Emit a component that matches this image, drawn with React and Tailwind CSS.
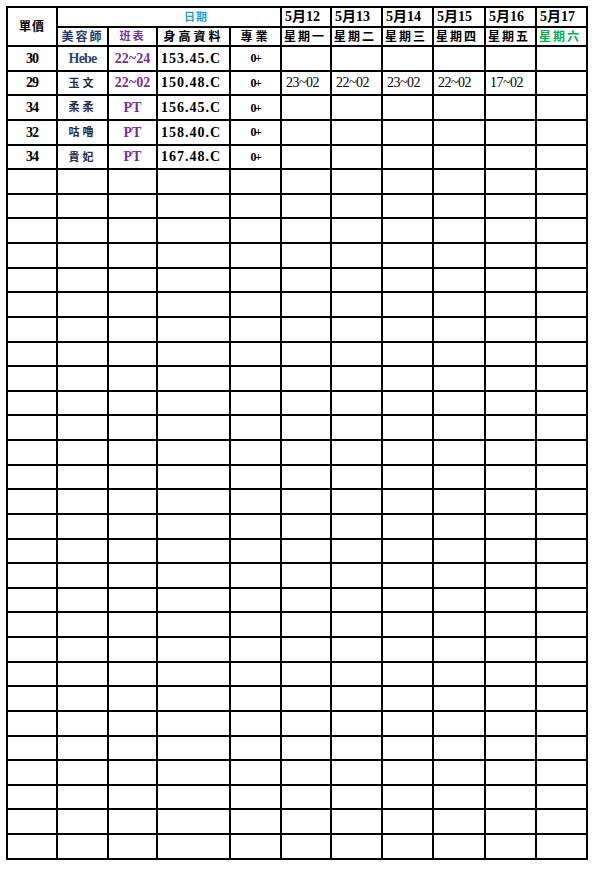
import React from 'react'

const SERIF = { fontFamily: '"Liberation Serif", "Noto Sans CJK TC", serif' }

const DATES = [
  { d: '5月12', w: '星期一' },
  { d: '5月13', w: '星期二' },
  { d: '5月14', w: '星期三' },
  { d: '5月15', w: '星期四' },
  { d: '5月16', w: '星期五' },
  { d: '5月17', w: '星期六', green: true },
]

const ROWS = [
  { price: '30', name: 'Hebe', latin: true, shift: '22~24', size: '153.45.C', days: ['', '', '', '', '', ''] },
  { price: '29', name: '玉文', shift: '22~02', size: '150.48.C', days: ['23~02', '22~02', '23~02', '22~02', '17~02', ''] },
  { price: '34', name: '柔柔', shift: 'PT', size: '156.45.C', days: ['', '', '', '', '', ''] },
  { price: '32', name: '咕嚕', shift: 'PT', size: '158.40.C', days: ['', '', '', '', '', ''] },
  { price: '34', name: '貴妃', shift: 'PT', size: '167.48.C', days: ['', '', '', '', '', ''] },
]

const EMPTY_ROWS = 28

export default function App() {
  return (
    <div className="w-[597px] h-[870px] bg-white pt-[6px] pl-[6px]" style={SERIF}>
      <div
        className="inline-grid bg-black gap-[2px] p-[2px] grid-cols-[48px_49px_47px_71px_49px_48px_49px_49px_50px_49px_49px] grid-rows-[18px_17px] auto-rows-[22.64px]"
      >
        {/* header */}
        <div className="row-span-2 bg-white flex items-center justify-center text-[12px] font-bold text-black tracking-[1px]">單價</div>
        <div className="col-span-4 bg-white flex items-center justify-center pl-[54px] text-[11px] font-bold text-[#1ba1e2] tracking-[1px]">日期</div>
        {DATES.map((x) => (
          <div key={x.d} className="bg-white flex items-center pl-[3px] text-[14px] font-bold text-black leading-none">
            {x.d}
          </div>
        ))}
        <div className="bg-white flex items-center justify-center text-[12px] font-bold text-[#1f3a6e] tracking-[2px]">美容師</div>
        <div className="bg-white flex items-center justify-center text-[11px] font-bold text-[#7030a0] tracking-[2px]">班表</div>
        <div className="bg-white flex items-center justify-center text-[12px] font-bold text-black tracking-[3px]">身高資料</div>
        <div className="bg-white flex items-center justify-center text-[12px] font-bold text-black tracking-[3px]">專業</div>
        {DATES.map((x) => (
          <div
            key={x.w}
            className={`bg-white flex items-center pl-[2px] text-[12px] font-bold leading-none tracking-[2px] ${x.green ? 'text-[#00b050]' : 'text-black'}`}
          >
            {x.w}
          </div>
        ))}

        {/* data rows */}
        {ROWS.map((r, i) => (
          <React.Fragment key={i}>
            <div className="bg-white flex items-center justify-center text-[14px] font-bold text-black tracking-[-1px]">{r.price}</div>
            <div
              className={`bg-white flex items-center justify-center font-bold ${r.latin ? 'text-[14px] text-[#333f70] tracking-[-0.8px]' : 'text-[11px] text-[#1f2a4e] tracking-[3px]'}`}
            >
              {r.name}
            </div>
            <div className="bg-white flex items-center justify-center text-[14px] font-bold text-[#7030a0]">{r.shift}</div>
            <div className="bg-white flex items-center pl-[3px] text-[14px] font-bold text-black tracking-[1px]">{r.size}</div>
            <div className="bg-white flex items-center justify-center text-[12px] font-bold text-black tracking-[-1.5px]">0+</div>
            {r.days.map((d, j) => (
              <div key={j} className="bg-white flex items-center pl-[4px] text-[14px] text-black tracking-[-0.5px]">
                {d}
              </div>
            ))}
          </React.Fragment>
        ))}

        {Array.from({ length: EMPTY_ROWS * 11 }).map((_, k) => (
          <div key={k} className="bg-white" />
        ))}
      </div>
    </div>
  )
}
